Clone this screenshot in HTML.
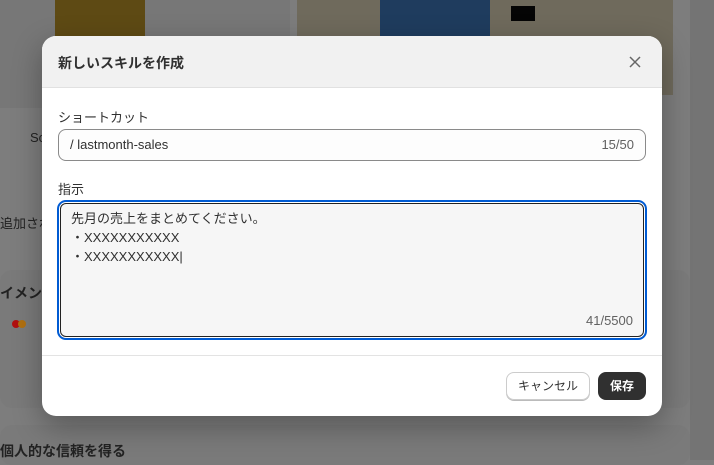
<!DOCTYPE html>
<html><head><meta charset="utf-8"><style>
*{box-sizing:border-box;margin:0;padding:0}
body{width:714px;height:460px;overflow:hidden;background:#7d7d7d;font-family:"Liberation Sans","Noto Sans CJK JP",sans-serif;position:relative}
.abs{position:absolute}
.modal{left:42px;top:36px;width:620px;height:380px;background:#fff;border-radius:14px;overflow:hidden;box-shadow:0 10px 30px rgba(0,0,0,.3)}
.hd{height:52px;background:#f1f1f1;border-bottom:1px solid #e1e1e1;position:relative}
.hd h1{position:absolute;left:16px;top:17px;font-size:14px;font-weight:bold;color:#303030}
.lbl{font-size:13px;color:#303030}
</style></head><body>
<div class="abs" style="left:0;top:0;width:290px;height:108px;background:#777"></div>
<div class="abs" style="left:55px;top:0;width:90px;height:45px;background:#5e4a14"></div>
<div class="abs" style="left:297px;top:0;width:376px;height:95px;background:#6f6a5c"></div>
<div class="abs" style="left:380px;top:0;width:110px;height:95px;background:#1f3c5e"></div>
<div class="abs" style="left:511px;top:6px;width:24px;height:15px;background:#050505"></div>
<div class="abs" style="left:690px;top:0;width:24px;height:460px;background:#747474"></div>
<div class="abs" style="left:0;top:270px;width:690px;height:138px;background:#7a7a7a;border-radius:12px"></div>
<div class="abs" style="left:0;top:425px;width:690px;height:40px;background:#7a7a7a;border-radius:12px"></div>
<div class="abs" style="left:0;top:283px;font-size:14px;font-weight:bold;color:#222">イメント</div>
<div class="abs" style="left:0;top:441px;font-size:14px;font-weight:bold;color:#222">個人的な信頼を得る</div>
<div class="abs" style="left:30px;top:130px;font-size:13px;color:#222">Sc</div>
<div class="abs" style="left:0;top:213px;font-size:13px;color:#222">追加され</div>
<div class="abs" style="left:12px;top:320px;width:8px;height:8px;border-radius:50%;background:#b01010"></div>
<div class="abs" style="left:18px;top:320px;width:8px;height:8px;border-radius:50%;background:#b07010"></div>
<div class="abs modal">
 <div class="hd"><h1>新しいスキルを作成</h1>
  <svg class="abs" style="left:587px;top:20px" width="12" height="12" viewBox="0 0 12 12"><path d="M1 1L11 11M11 1L1 11" stroke="#666" stroke-width="1.5"/></svg></div>
 <div class="abs lbl" style="left:16px;top:71px">ショートカット</div>
 <div class="abs" style="left:16px;top:93px;width:588px;height:32px;border:1px solid #8a8a8a;border-radius:8px;background:#fdfdfd">
  <span class="abs lbl" style="left:11px;top:7px">/ lastmonth-sales</span>
  <span class="abs" style="right:11px;top:7px;font-size:13px;color:#616161">15/50</span></div>
 <div class="abs lbl" style="left:16px;top:143px">指示</div>
 <div class="abs" style="left:15px;top:164px;width:590px;height:140px;border:2px solid #005bd3;border-radius:9px;">
  <div style="position:absolute;inset:1px;border:1px solid #222;border-radius:6px;background:#f6f6f6"></div>
  <div class="abs lbl" style="left:12px;top:7px;line-height:19px">先月の売上をまとめてください。<br>・XXXXXXXXXXX<br>・XXXXXXXXXXX|</div>
  <span class="abs" style="right:12px;top:111px;font-size:13px;color:#616161">41/5500</span></div>
 <div class="abs" style="left:0;top:319px;width:620px;height:1px;background:#e3e3e3"></div>
 <div class="abs" style="left:464px;top:336px;width:84px;height:28px;border:1px solid #ccc;border-radius:8px;font-size:12px;color:#303030;text-align:center;line-height:26px;box-shadow:0 1px 0 #bbb">キャンセル</div>
 <div class="abs" style="left:556px;top:336px;width:48px;height:28px;background:#303030;border-radius:8px;font-size:12px;font-weight:bold;color:#fff;text-align:center;line-height:28px">保存</div>
</div>
</body></html>
